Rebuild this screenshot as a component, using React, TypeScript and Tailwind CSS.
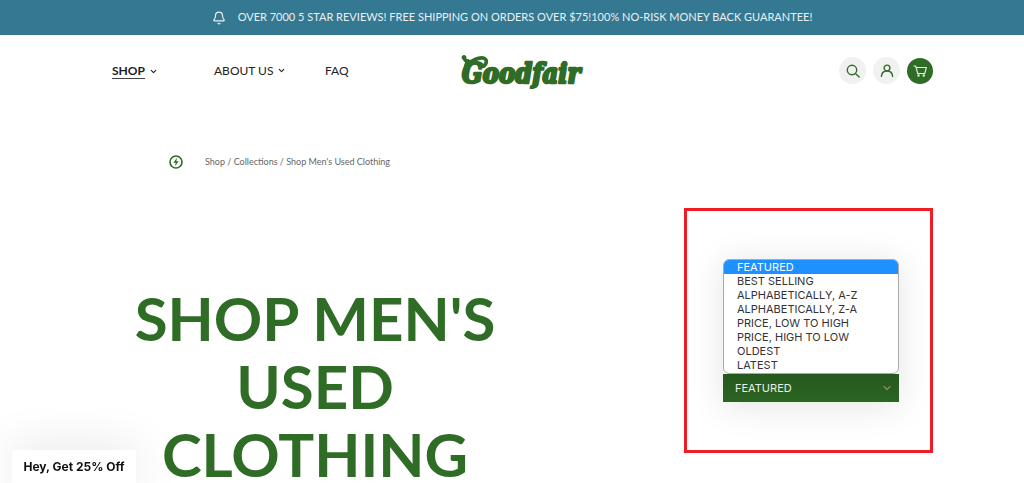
import * as React from "react";
import { Bell, ChevronDown } from "lucide-react";

const navLinks = [
  { label: "SHOP", hasMenu: true, active: true, className: "w-[102px]" },
  { label: "ABOUT US", hasMenu: true, active: false, className: "w-[111px]" },
  { label: "FAQ", hasMenu: false, active: false, className: "" },
];

const sortOptions = [
  "FEATURED",
  "BEST SELLING",
  "ALPHABETICALLY, A-Z",
  "ALPHABETICALLY, Z-A",
  "PRICE, LOW TO HIGH",
  "PRICE, HIGH TO LOW",
  "OLDEST",
  "LATEST",
];

function Logo() {
  return (
    <svg
      width="124"
      height="36"
      viewBox="0 0 124 36"
      role="img"
      aria-label="Goodfair"
      className="overflow-visible"
      fill="#2f6d26"
      stroke="#2f6d26"
    >
      {/* Swash over the G */}
      <path
        d="M3 4.500c1 4 4 5.500 8 3.500s9-4.500 12.500-2.500 1.500 7-2 8"
        fill="none"
        strokeWidth="3.600"
        strokeLinecap="round"
      />
      <path d="M7 8c-3 5-4 12-2 17" fill="none" strokeWidth="4" strokeLinecap="round" />
      <circle cx="3" cy="4.500" r="2" />
      <text
        x="1"
        y="30"
        fontSize="27"
        strokeWidth="2.4"
        strokeLinejoin="round"
        className="font-['DejaVu_Serif_Condensed','DejaVu_Serif',serif] font-bold italic"
      >
        Goodfair
      </text>
    </svg>
  );
}

function Header() {
  return (
    <header className="grid grid-cols-[1fr_auto_1fr] items-center h-[71px] pl-28 pr-[91px]">
      <nav className="flex text-[12px] leading-4 text-[#222]">
        {navLinks.map((link) => (
          <div key={link.label} className={link.className}>
            <a href="#" className="inline-flex items-center gap-1 whitespace-nowrap">
              <span
                className={
                  link.active ? "font-bold border-b border-[#444] leading-[14px]" : ""
                }
              >
                {link.label}
              </span>
              {link.hasMenu && <ChevronDown size={9} strokeWidth={3} />}
            </a>
          </div>
        ))}
      </nav>

      <a href="#">
        <Logo />
      </a>

      <div className="flex items-center justify-end gap-[7px]">
        <button
          aria-label="Search"
          className="flex items-center justify-center size-[27px] rounded-full bg-[#f1f1f1]"
        >
          <svg width="14" height="14" viewBox="0 0 14 14" fill="none" stroke="#2f6d26" strokeWidth="1.4">
            <circle cx="6" cy="6" r="4.7" />
            <path d="m9.4 9.4 3.8 3.6" strokeLinecap="round" />
          </svg>
        </button>
        <button
          aria-label="Account"
          className="flex items-center justify-center size-[27px] rounded-full bg-[#f1f1f1]"
        >
          <svg width="14" height="14" viewBox="0 0 14 14" fill="none" stroke="#2f6d26" strokeWidth="1.4">
            <circle cx="7" cy="4" r="2.9" />
            <path d="M1.4 12.4C1.6 9 4 7 7 7s5.400 2 5.600 5.400" strokeLinecap="round" />
          </svg>
        </button>
        <button
          aria-label="Cart"
          className="flex items-center justify-center size-[26px] rounded-full bg-[#2f6d26]"
        >
          <svg width="14" height="12" viewBox="0 0 14 12" fill="none" stroke="#e6efe4" strokeWidth="1.1">
            <path d="M.5 1h2.200l2 7.500h7L13.400 2.500H3.200" strokeLinejoin="round" />
            <circle cx="5.500" cy="10.500" r=".7" />
            <circle cx="10.800" cy="10.500" r=".7" />
          </svg>
        </button>
      </div>
    </header>
  );
}

function SortBox() {
  const [selected, setSelected] = React.useState(sortOptions[0]);

  return (
    <div className="w-[249px] h-[245px] border-3 border-[#ee1c25] px-9 pt-12">
      <div className="w-44 shadow-[0_4px_34px_rgba(0,0,0,0.11)]">
        <ul
          role="listbox"
          aria-label="Sort options"
          className="overflow-hidden rounded-md border border-[#aaa] bg-white pb-px text-[11px] leading-[14px] text-[#333]"
        >
          {sortOptions.map((option) => (
            <li key={option} role="option" aria-selected={option === selected}>
              <button
                onClick={() => setSelected(option)}
                className={
                  option === selected
                    ? "block w-full pl-[13px] text-left bg-[#1e90ff] text-white"
                    : "block w-full pl-[13px] text-left"
                }
              >
                {option}
              </button>
            </li>
          ))}
        </ul>
        <div className="relative">
          <select
            aria-label="Sort by"
            value={selected}
            onChange={(e) => setSelected(e.target.value)}
            className="block w-full h-7 appearance-none bg-linear-to-b from-[#26581e] to-[#2b6522] pl-3 text-[11px] text-[#e8efe6]"
          >
            {sortOptions.map((option) => (
              <option key={option}>{option}</option>
            ))}
          </select>
          <ChevronDown
            size={12}
            className="absolute right-[6px] top-2 text-[#d9b98c] pointer-events-none"
          />
        </div>
      </div>
    </div>
  );
}

export default function App() {
  return (
    <div className="bg-white font-[Lato,sans-serif]">
      {/* Announcement bar */}
      <div className="flex items-center justify-center gap-3 h-[35px] bg-[#347892] text-[11px] text-[#e8f1f4]">
        <Bell size={14} />
        <p>
          OVER 7000 5 STAR REVIEWS! FREE SHIPPING ON ORDERS OVER $75!100% NO-RISK MONEY BACK
          GUARANTEE!
        </p>
      </div>

      <Header />

      <main className="pl-28 pr-[91px]">
        {/* Breadcrumb */}
        <div className="flex items-center gap-[22px] h-4 mt-12 pl-[57px] text-[9px] text-[#666]">
          <svg width="14" height="14" viewBox="0 0 14 14">
            <circle cx="7" cy="7" r="6" fill="none" stroke="#2f6d26" strokeWidth="1.6" />
            <path d="M8 2.800 4.300 7.700h2.400L6 11.200l3.700-4.900H7.300z" fill="#2f6d26" />
          </svg>
          <p>
            <a href="#">Shop</a> / <a href="#">Collections</a> / Shop Men's Used Clothing
          </p>
        </div>

        <div className="flex justify-between mt-[38px]">
          <h1 className="w-[406px] pt-[76px] text-center text-[60px] leading-[68px] font-bold text-[#2f6d26]">
            SHOP MEN'S USED CLOTHING
          </h1>
          <div className="font-[Inter,sans-serif]">
            <SortBox />
          </div>
        </div>
      </main>

      {/* Discount teaser */}
      <button className="fixed bottom-0 left-3 h-[33px] w-[124px] rounded-t-sm bg-white text-[12px] font-bold text-[#111] shadow-[0_0_50px_rgba(0,0,0,0.12)] font-[Inter,sans-serif]">
        Hey, Get 25% Off
      </button>
    </div>
  );
}
